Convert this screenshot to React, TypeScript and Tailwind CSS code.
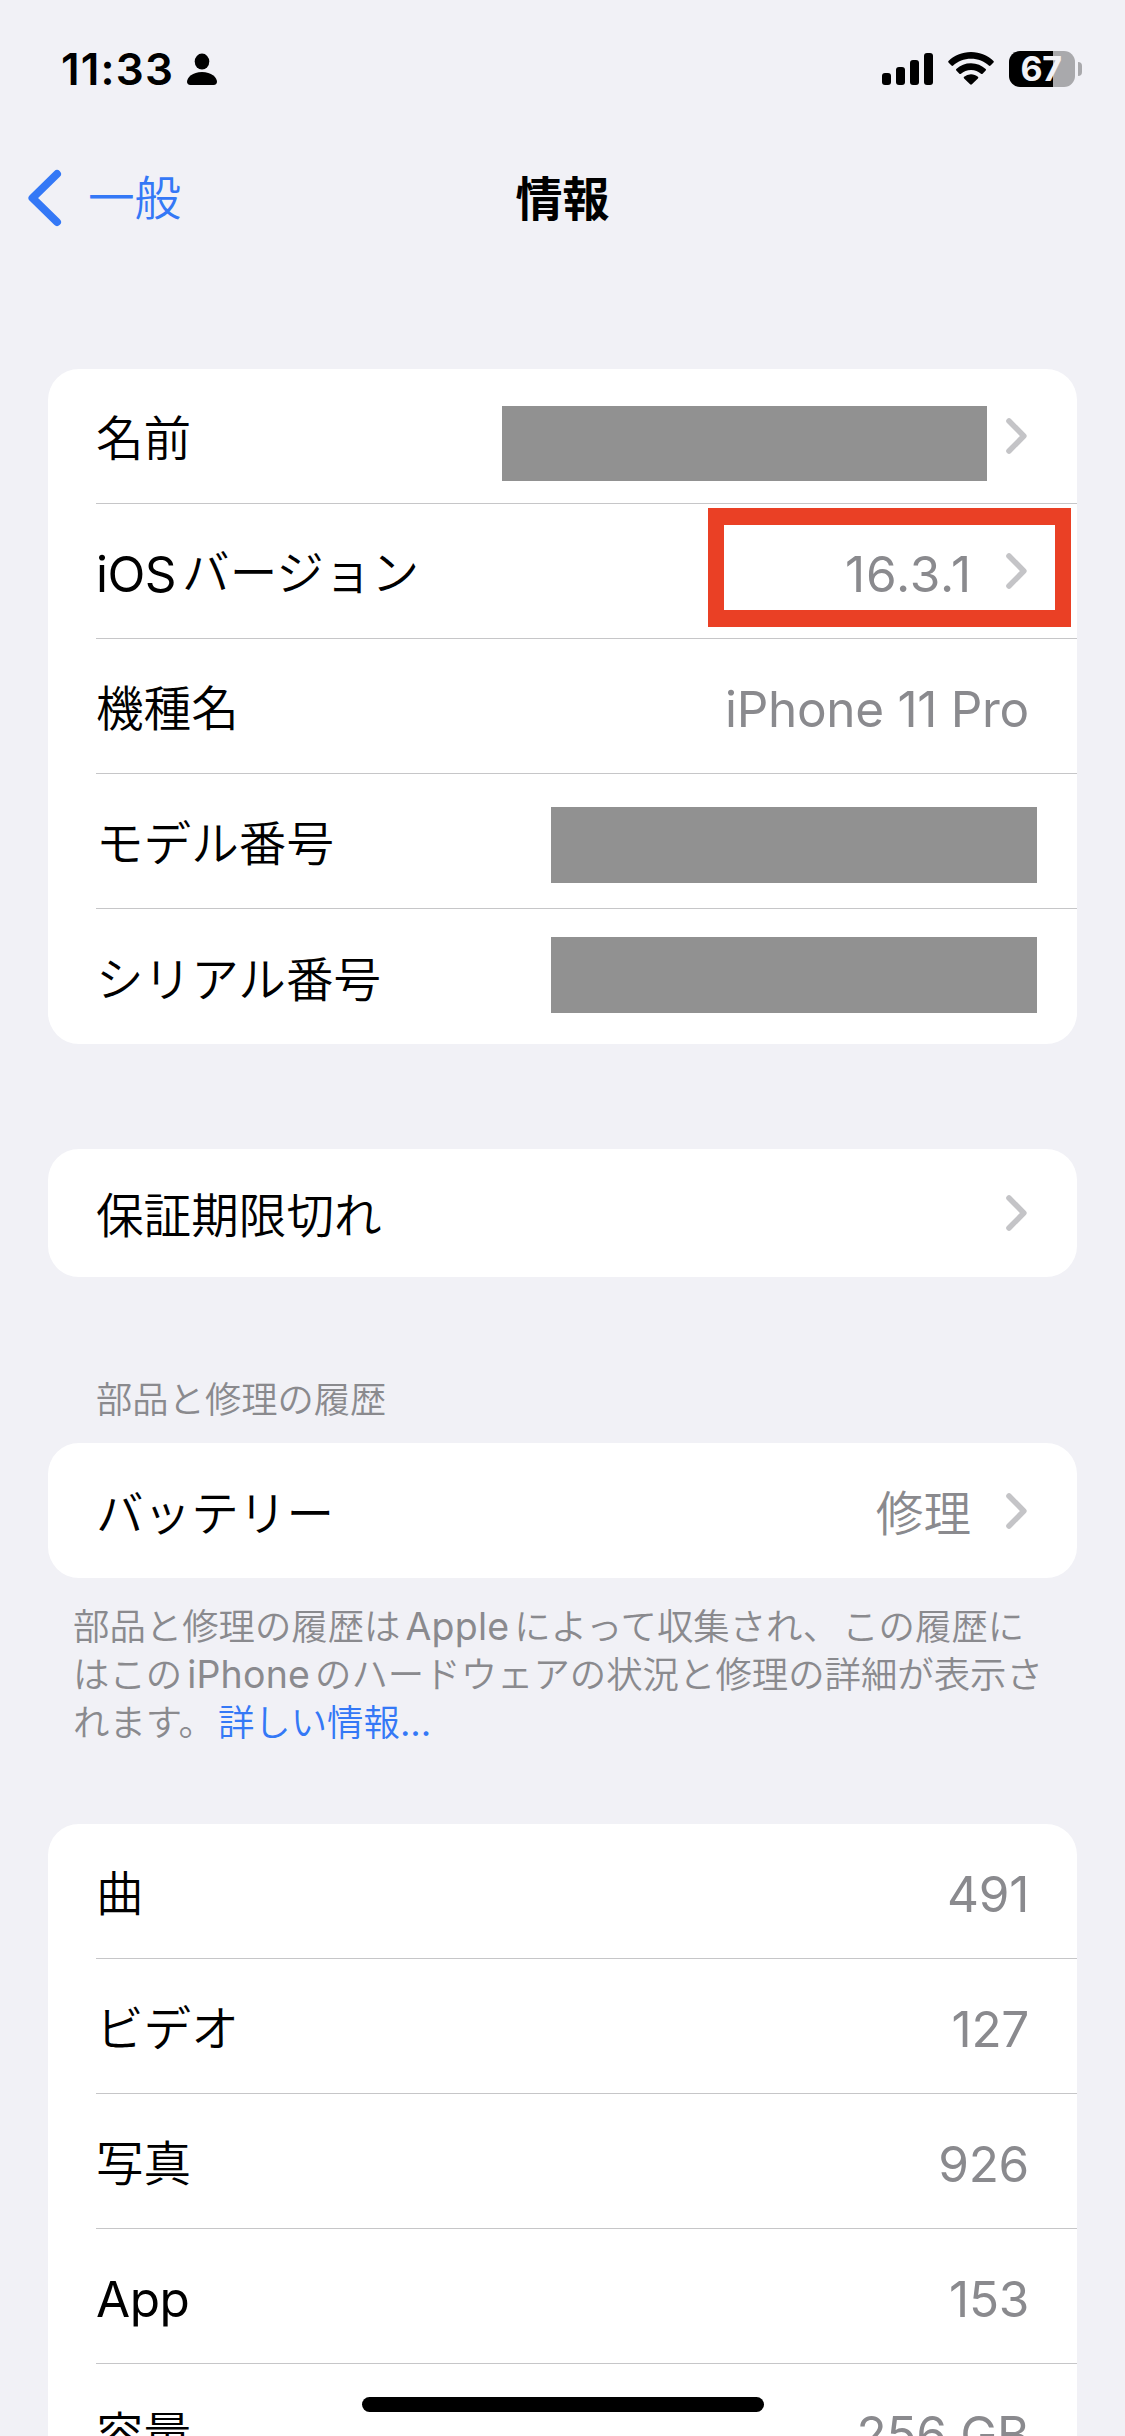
import type { ReactNode } from "react";

const JP = "font-['Noto_Sans_CJK_JP',sans-serif]";
const LATIN = "font-['Inter','Noto_Sans_CJK_JP',sans-serif]";

function StatusBar() {
  return (
    <div className="flex h-[138px] items-start justify-between pl-[61px] pr-[43px] pt-[51px]">
      <div className="flex items-start">
        <span className={`${LATIN} w-[126px] whitespace-nowrap text-[44px] font-semibold leading-[36px] tracking-[1.2px] text-black`}>
          11:33
        </span>
        <svg className="mt-[2px] h-[33px] w-[30px]" viewBox="0 0 30 33">
          <ellipse cx="15" cy="8.6" rx="7.3" ry="8" />
          <path d="M3.4 32C1.2 32 0 30.8 0 28.8C0 24.6 5.6 19 15 19s15 5.600 15 9.800C30 30.800 28.800 32 26.600 32Z" />
        </svg>
      </div>
      <div className="flex h-9 items-start">
        <div className="mr-[15px] flex h-[34px] items-end gap-[5px]">
          <i className="h-[12px] w-[9px] rounded-[3px] bg-black" />
          <i className="h-[18px] w-[9px] rounded-[3px] bg-black" />
          <i className="h-[25px] w-[9px] rounded-[3px] bg-black" />
          <i className="h-[32px] w-[9px] rounded-[3px] bg-black" />
        </div>
        <svg className="mr-[15px] mt-px h-[33px] w-[46px]" viewBox="0 0 46 33">
          <path d="M23 0C32 0 40 3.500 45.500 9c.500.500.500 1.100 0 1.600l-3 3c-.500.500-1.200.500-1.700 0C36.200 9.300 30 6.700 23 6.700S9.800 9.300 5.200 13.600c-.500.500-1.200.500-1.700 0l-3-3C0 10.100 0 9.500.500 9 6 3.500 14 0 23 0Z" />
          <path d="M23 11.200c5.700 0 10.900 2.200 14.700 5.800.500.500.500 1.100 0 1.600l-3.100 3.100c-.500.500-1.100.500-1.600 0A14.600 14.600 0 0 0 23 17.900c-3.900 0-7.400 1.400-10 3.800-.500.500-1.100.500-1.600 0l-3.100-3.100c-.500-.500-.500-1.100 0-1.600A21.500 21.500 0 0 1 23 11.200Z" />
          <path d="M23 22.300c2.600 0 5 .900 6.900 2.500.500.400.500 1.100 0 1.600l-6 5.900c-.500.500-1.300.500-1.800 0l-6-5.900c-.500-.500-.500-1.200 0-1.600A10.700 10.700 0 0 1 23 22.300Z" />
        </svg>
        <div className="flex items-center gap-[3px]">
          <div className="flex h-9 w-[66px] items-center justify-center rounded-[11px] bg-[linear-gradient(90deg,#000_44px,#a9a9ac_44px)]">
            <span className={`${LATIN} mr-[2px] text-[34px] font-bold leading-9 tracking-[-0.5px] text-[#f2f2f7]`}>67</span>
          </div>
          <i className="h-[14px] w-[4px] rounded-r-full bg-[#a9a9ac]" />
        </div>
      </div>
    </div>
  );
}

function NavBar() {
  return (
    <div className="grid h-[120px] grid-cols-3 items-center">
      <div className="flex items-center pl-7 text-[#3478f6]">
        <svg className="h-[58px] w-[34px]" viewBox="0 0 34 58" fill="none" stroke="currentColor" strokeWidth="8" strokeLinecap="round" strokeLinejoin="round">
          <path d="M29 5L4.500 29L29 53" />
        </svg>
        <span className="mb-[6px] ml-[26px] text-[46.600px] leading-[60px]">一般</span>
      </div>
      <h1 className="mb-[5px] text-center text-[47px] font-bold leading-[60px] text-black">情報</h1>
    </div>
  );
}

function Chevron() {
  return (
    <svg className="h-[36px] w-[21px]" viewBox="0 0 21 36" fill="none" stroke="#c4c4c7" strokeWidth="5.600" strokeLinecap="round" strokeLinejoin="round">
      <path d="M3 3L17.800 18L3 33" />
    </svg>
  );
}

function Row({ label, value, chevron, last }: { label: ReactNode; value?: ReactNode; chevron?: boolean; last?: boolean }) {
  return (
    <div className={last ? "ml-12 flex h-[135px] items-center pr-[50px]" : "ml-12 flex h-[135px] items-center border-b border-[#c6c6c8] pr-[50px]"}>
      <span className="grow whitespace-nowrap text-[47.600px] leading-[60px] text-black">{label}</span>
      {value}
      {chevron && (
        <span className="ml-[35px]">
          <Chevron />
        </span>
      )}
    </div>
  );
}

function Value({ children, wide }: { children: ReactNode; wide?: boolean }) {
  return (
    <span
      className={`${LATIN} whitespace-nowrap pt-[5px] text-[49.500px] font-normal leading-[60px] text-[#8a8a8e] ${wide ? "-mr-px tracking-[0.9px]" : "-mr-[2px] tracking-[-0.3px]"}`}
    >
      {children}
    </span>
  );
}

function Latin({ children }: { children: ReactNode }) {
  return <span className={`${LATIN} relative top-[2px] mr-[6px] text-[49.500px] font-normal tracking-[-0.5px]`}>{children}</span>;
}

function SmallLatin({ children }: { children: ReactNode }) {
  return <span className={`${LATIN} mx-[5px] text-[37.500px] font-normal tracking-[0.2px]`}>{children}</span>;
}

function Card({ children }: { children: ReactNode }) {
  return <section className="mx-12 rounded-[31px] bg-white">{children}</section>;
}

export default function App() {
  return (
    <main lang="ja" className={`${JP} relative h-[2436px] w-[1125px] overflow-hidden bg-[#f1f1f6] font-[350]`}>
      <StatusBar />
      <NavBar />

      <div className="pt-[111px]">
        <Card>
          <Row label="名前" value={<div className="-mr-[16px] mt-[14px] h-[75px] w-[485px] bg-[#919191]" />} chevron />
          <div className="relative">
            <Row label={<><Latin>iOS</Latin>バージョン</>} value={<Value wide>16.3.1</Value>} chevron />
            <div className="absolute right-[6px] top-[4px] h-[119px] w-[363px] border-x-[16px] border-y-[17px] border-[#ea4025]" />
          </div>
          <Row label="機種名" value={<Value>iPhone 11 Pro</Value>} />
          <Row label="モデル番号" value={<div className="-mr-[10px] mt-[8px] h-[76px] w-[486px] bg-[#919191]" />} />
          <Row label="シリアル番号" value={<div className="-mr-[10px] -mt-[4px] h-[76px] w-[486px] bg-[#919191]" />} last />
        </Card>
      </div>

      <div className="pt-[105px]">
        <Card>
          <div className="flex h-32 items-center pl-12 pr-[50px]">
            <span className="grow text-[47.600px] leading-[60px] text-black">保証期限切れ</span>
            <Chevron />
          </div>
        </Card>
      </div>

      <h2 className="h-[166px] pl-24 pt-[96px] text-[36.300px] leading-[48px] text-[#8a8a8e]">部品と修理の履歴</h2>
      <Card>
        <Row label="バッテリー" value={<span className="text-[47.600px] leading-[60px] text-[#8a8a8e]">修理</span>} chevron last />
      </Card>
      <p className="h-[246px] whitespace-nowrap pl-[73px] pt-[22px] text-[36.400px] leading-[48px] text-[#8a8a8e]">
        <span className="block h-12">
          部品と修理の履歴は<SmallLatin>Apple</SmallLatin>によって収集され<span className="mr-[3px]">、</span>この履歴に
        </span>
        <span className="block h-12">はこの<SmallLatin>iPhone</SmallLatin>のハードウェアの状況と修理の詳細が表示さ</span>
        <span className="block h-12">
          れます<span className="mr-[3px]">。</span>
          <a className="text-[#3478f6]">詳しい情報<span className={`${LATIN} font-normal`}>...</span></a>
        </span>
      </p>

      <Card>
        <Row label="曲" value={<Value>491</Value>} />
        <Row label="ビデオ" value={<Value>127</Value>} />
        <Row label="写真" value={<Value>926</Value>} />
        <Row label={<Latin>App</Latin>} value={<Value>153</Value>} />
        <Row label="容量" value={<Value>256 GB</Value>} last />
      </Card>

      <div className="absolute bottom-6 left-[362px] h-[15px] w-[402px] rounded-full bg-black" />
    </main>
  );
}
